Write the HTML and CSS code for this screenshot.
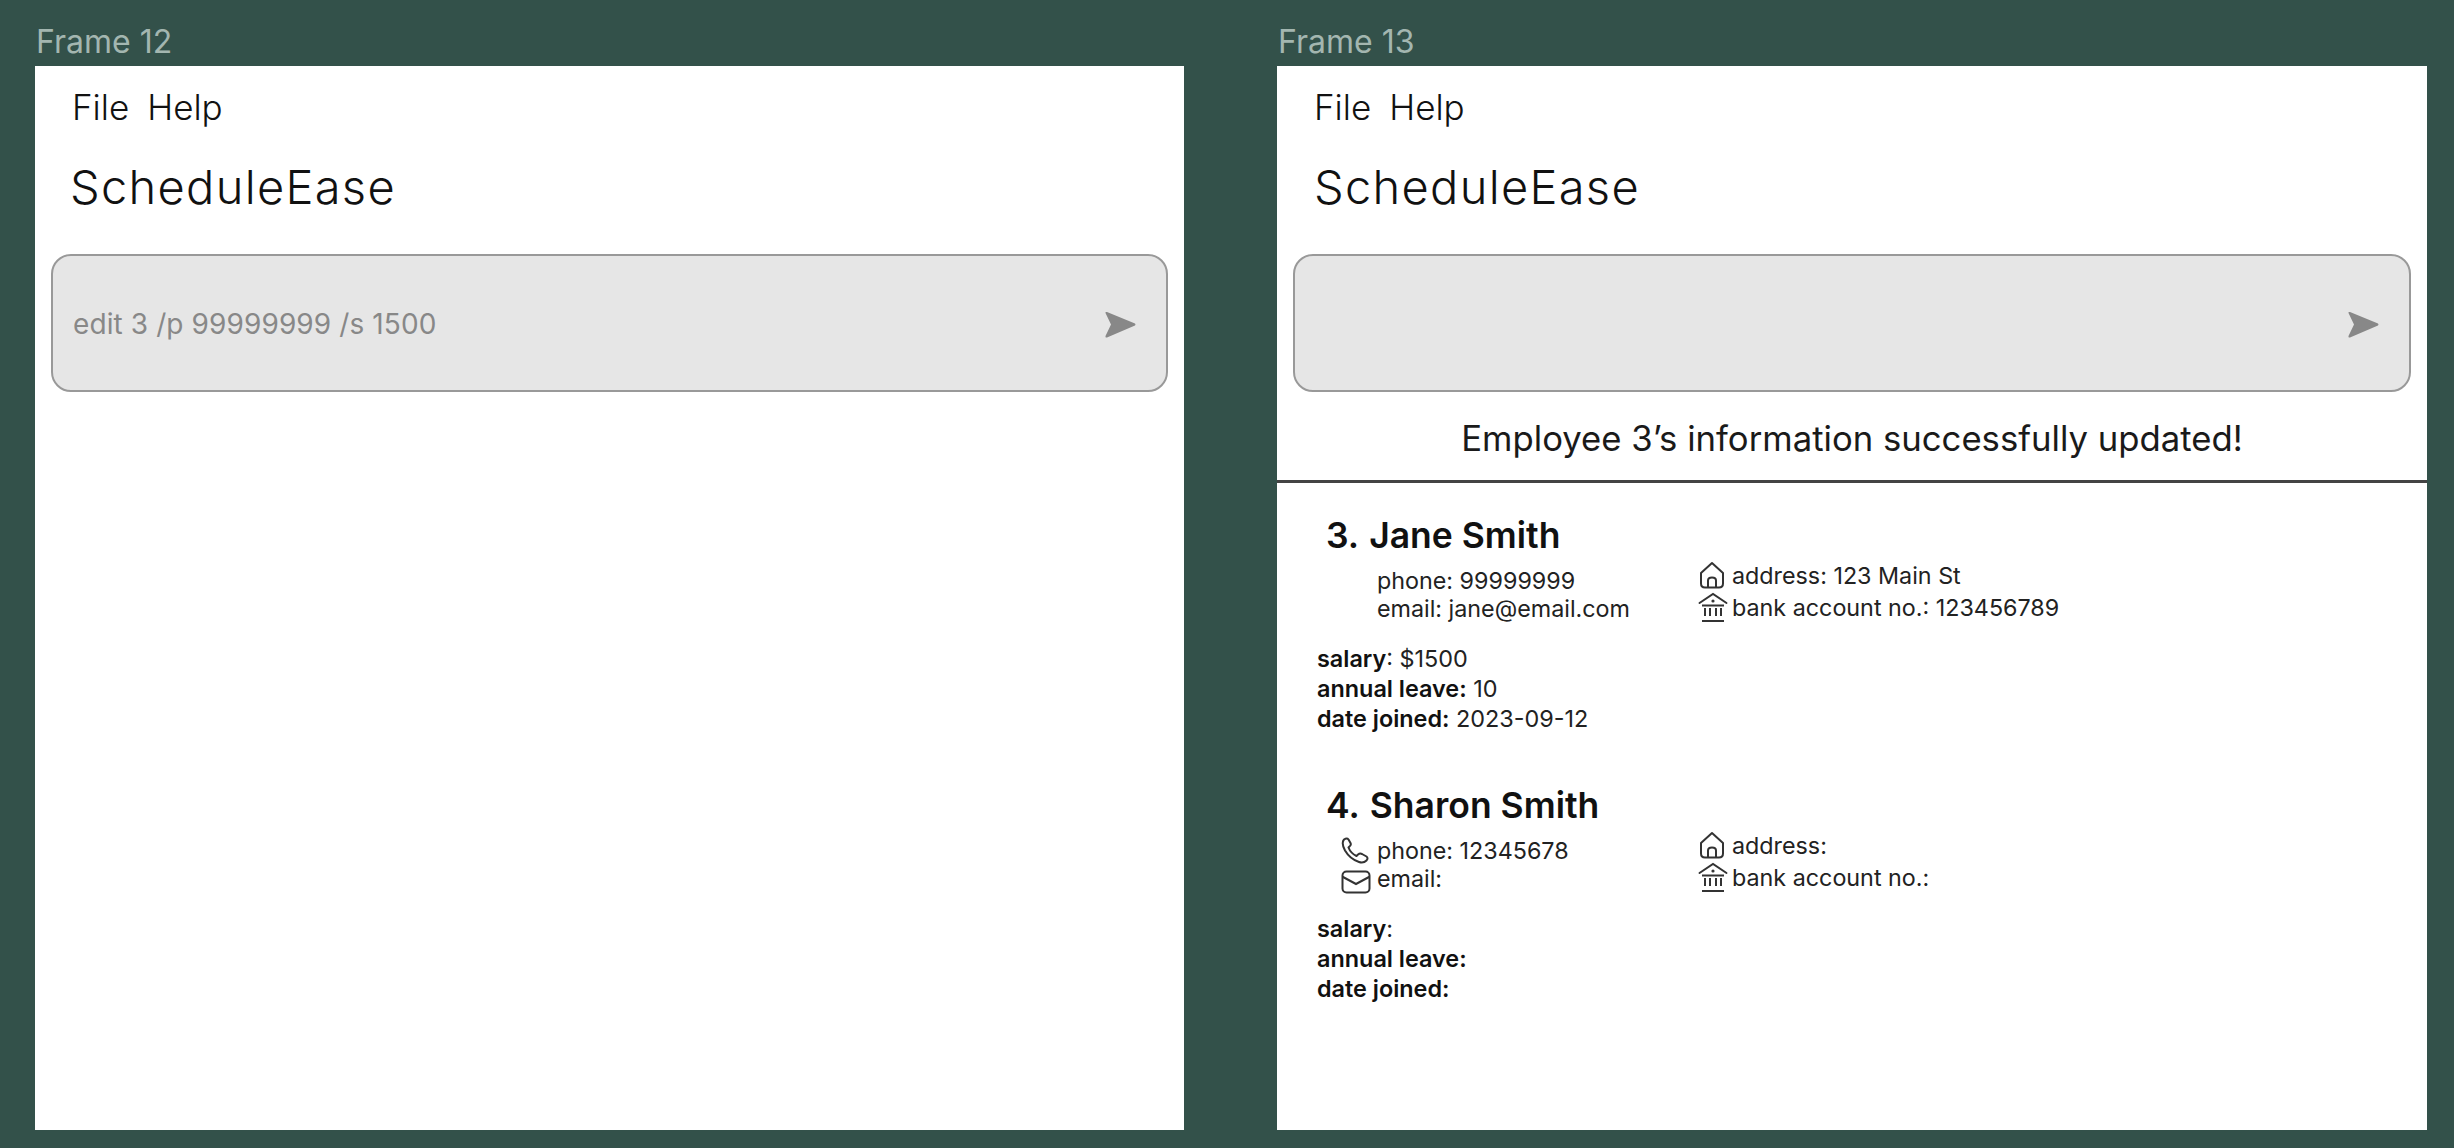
FILE: index.html
```html
<!DOCTYPE html>
<html lang="en">
<head>
    <meta charset="UTF-8">
    <meta name="viewport" content="width=device-width, initial-scale=1.0">
    <title>ScheduleEase Frames</title>
    <link rel="stylesheet" href="styles.css">
</head>
<body>
    <svg class="icon-defs" width="0" height="0" aria-hidden="true">
        <symbol id="i-send" viewBox="0 0 31 27">
            <path d="M2 1 L30 12.5 Q31 13.5 30 14.5 L2 26.5 Q0 27 0.5 25 L6 13.5 L0.5 2 Q0 0.5 2 1 Z" fill="#888888"/>
        </symbol>
        <symbol id="i-home" viewBox="0 0 26 28">
            <path d="M2 12 L13 2 L24 12 V22.5 Q24 26.5 20 26.5 H6 Q2 26.5 2 22.5 Z" fill="none" stroke="#333" stroke-width="2" stroke-linejoin="round"/>
            <path d="M9 26 V19.5 Q9 16.5 13 16.5 Q17 16.5 17 19.5 V26" fill="none" stroke="#333" stroke-width="2"/>
        </symbol>
        <symbol id="i-bank" viewBox="0 0 30 30">
            <path d="M1.5 11 L15 2 L28.5 11" fill="none" stroke="#333" stroke-width="2" stroke-linecap="round"/>
            <circle cx="15" cy="9" r="1.6" fill="#333"/>
            <path d="M4 13.5 H26 M7 16 V24 M12 16 V24 M18 16 V24 M23 16 V24 M4 29 H26" fill="none" stroke="#333" stroke-width="2"/>
        </symbol>
        <symbol id="i-phone" viewBox="0 0 28 27">
            <path d="M3 2.5 Q6 0.5 7.5 2.5 L9.5 6 Q10.5 8 8.5 9.5 L7.5 10.5 Q9.5 16 15.5 19 L17 17.5 Q19 16 21 17 L25.5 19.5 Q27.5 21 25.5 23.5 Q22.5 26.5 18 25 Q9 22 4 13.5 Q0 6 3 2.5 Z" fill="none" stroke="#333" stroke-width="2" stroke-linejoin="round"/>
        </symbol>
        <symbol id="i-mail" viewBox="0 0 30 24">
            <rect x="1.5" y="1.5" width="27" height="21" rx="4" fill="none" stroke="#333" stroke-width="2"/>
            <path d="M2 7 L15 14 L28 7" fill="none" stroke="#333" stroke-width="2" stroke-linecap="round"/>
        </symbol>
    </svg>

    <section class="frame-col frame-col-left">
        <div class="frame-label">Frame 12</div>
        <div class="frame">
            <nav class="menu"><span>File</span><span>Help</span></nav>
            <h1 class="title">ScheduleEase</h1>
            <div class="command-box">
                <span class="command-text">edit 3 /p 99999999 /s 1500</span>
                <svg class="send"><use href="#i-send"/></svg>
            </div>
        </div>
    </section>

    <section class="frame-col frame-col-right">
        <div class="frame-label">Frame 13</div>
        <div class="frame">
            <nav class="menu"><span>File</span><span>Help</span></nav>
            <h1 class="title">ScheduleEase</h1>
            <div class="command-box">
                <span class="command-text"></span>
                <svg class="send"><use href="#i-send"/></svg>
            </div>
            <p class="message">Employee 3’s information successfully updated!</p>

            <div class="employees">
                <article class="card">
                    <h2 class="name"><span class="num">3.</span>Jane Smith</h2>
                    <div class="contacts">
                        <div class="contact-col contact-left">
                            <div class="row"><span class="slot"></span>phone: 99999999</div>
                            <div class="row"><span class="slot"></span>email: jane@email.com</div>
                        </div>
                        <div class="contact-col contact-right">
                            <div class="row"><span class="slot"><svg class="ic-home"><use href="#i-home"/></svg></span>address: 123 Main St</div>
                            <div class="row"><span class="slot"><svg class="ic-bank"><use href="#i-bank"/></svg></span>bank account no.: 123456789</div>
                        </div>
                    </div>
                    <div class="stats">
                        <div><b>salary</b>: $1500</div>
                        <div><b>annual leave:</b> 10</div>
                        <div><b>date joined:</b> 2023-09-12</div>
                    </div>
                </article>

                <article class="card">
                    <h2 class="name"><span class="num">4.</span>Sharon Smith</h2>
                    <div class="contacts">
                        <div class="contact-col contact-left">
                            <div class="row"><span class="slot"><svg class="ic-phone"><use href="#i-phone"/></svg></span>phone: 12345678</div>
                            <div class="row"><span class="slot"><svg class="ic-mail"><use href="#i-mail"/></svg></span>email:</div>
                        </div>
                        <div class="contact-col contact-right">
                            <div class="row"><span class="slot"><svg class="ic-home"><use href="#i-home"/></svg></span>address:</div>
                            <div class="row"><span class="slot"><svg class="ic-bank"><use href="#i-bank"/></svg></span>bank account no.:</div>
                        </div>
                    </div>
                    <div class="stats">
                        <div><b>salary</b>:</div>
                        <div><b>annual leave:</b></div>
                        <div><b>date joined:</b></div>
                    </div>
                </article>
            </div>
        </div>
    </section>
</body>
</html>
```

FILE: styles.css
```css
body {
    margin: 0;
    height: 1148px;
    overflow: hidden;
    display: flex;
    gap: 93px;
    padding-left: 35px;
    background-color: #33514a;
    font-family: Inter, "Liberation Sans", sans-serif;
    color: #1a1a1a;
}

.icon-defs {
    position: absolute;
}

.frame-col {
    width: 1150px;
}

.frame-col-left {
    width: 1149px;
}

.frame-label {
    height: 66px;
    box-sizing: border-box;
    padding: 24px 0 0 1px;
    font-size: 32px;
    line-height: 36px;
    color: #a3b6b0;
}

.frame {
    height: 1064px;
    background-color: #ffffff;
    display: flex;
    flex-direction: column;
}

.menu {
    display: flex;
    gap: 18px;
    padding: 19px 0 0 37px;
    font-size: 35px;
    font-weight: 350;
    line-height: 44px;
    color: #111111;
}

.title {
    margin: 0;
    padding: 30px 0 0 35px;
    height: 95px;
    font-size: 47px;
    font-weight: 350;
    letter-spacing: 1.3px;
    line-height: 56px;
    color: #111111;
}

.frame-col-right .title {
    padding-left: 37px;
}

.command-box {
    margin: 0 16px;
    height: 138px;
    box-sizing: border-box;
    display: flex;
    align-items: center;
    justify-content: space-between;
    padding: 2px 30px 0 20px;
    background-color: #e6e6e6;
    border: 2px solid #999999;
    border-radius: 20px;
}

.command-text {
    font-size: 28px;
    letter-spacing: 0.1px;
    color: #888888;
}

.send {
    width: 31px;
    height: 27px;
}

.message {
    margin: 0;
    height: 91px;
    line-height: 92px;
    text-align: center;
    font-size: 34.7px;
    border-bottom: 3px solid #444444;
    box-sizing: border-box;
}

.employees {
    padding: 33px 0 0 40px;
    display: flex;
    flex-direction: column;
    gap: 52px;
}

.name {
    margin: 0 0 3px 9px;
    font-size: 35.5px;
    font-weight: 600;
    line-height: 40px;
    color: #111111;
}

.num {
    margin-right: 10px;
}

.contacts {
    display: flex;
    font-size: 23.3px;
    color: #222222;
}

.contact-col .row {
    display: flex;
    align-items: center;
}

.contact-left {
    width: 357px;
    margin-left: 24px;
    padding-top: 7px;
}

.contact-left .row {
    height: 28px;
}

.contact-left .slot {
    width: 36px;
}

.contact-right .row {
    height: 32px;
}

.contact-right .slot {
    width: 34px;
}

.slot {
    display: flex;
    align-items: center;
    flex-shrink: 0;
}

.ic-home {
    width: 26px;
    height: 28px;
    margin-left: 1px;
}

.ic-bank {
    width: 30px;
    height: 30px;
}

.ic-phone {
    width: 28px;
    height: 27px;
}

.ic-mail {
    width: 30px;
    height: 24px;
    margin-top: 8px;
}

.stats {
    margin-top: 21px;
    font-size: 23.4px;
    line-height: 30px;
    color: #222222;
}

.stats b {
    font-weight: 600;
    color: #111111;
}
```
